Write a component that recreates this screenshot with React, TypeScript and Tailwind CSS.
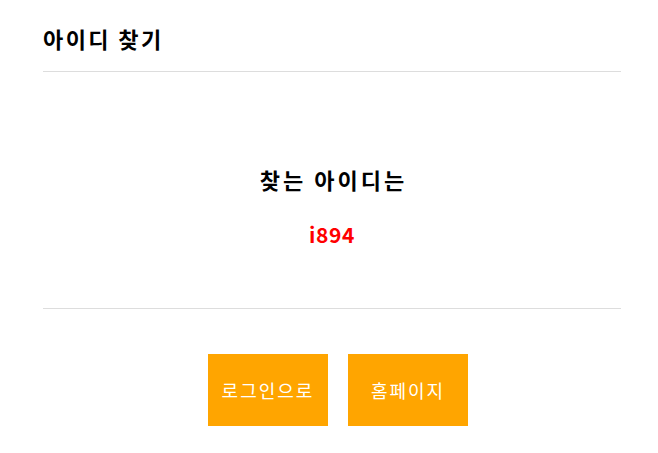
export default function App() {
  return (
    <div className="w-[658px] h-[453px] bg-white" style={{ fontFamily: '"Noto Sans CJK KR", "Noto Sans", sans-serif' }}>
      <div className="ml-[43px] w-[578px]">
        <div className="pt-[22px] h-[72px] border-b border-[#dddddd]">
          <h1 className="text-[22px] leading-[32px] font-bold text-black tracking-[2.4px]">아이디 찾기</h1>
        </div>
        <div className="h-[237px] border-b border-[#dddddd] flex flex-col items-center pt-[91px]">
          <p className="text-[22px] leading-[32px] font-bold text-black tracking-[3px] pl-[3px]">찾는 아이디는</p>
          <p className="mt-[24px] text-[21px] leading-[30px] font-bold text-[#ff0000] tracking-[0.6px]">i894</p>
        </div>
        <div className="flex gap-[20px] pt-[45px] ml-[165px]">
          <button className="w-[120px] h-[72px] bg-[#ffa500] text-white text-[18px] tracking-[2px]">로그인으로</button>
          <button className="w-[120px] h-[72px] bg-[#ffa500] text-white text-[18px] tracking-[2px]">홈페이지</button>
        </div>
      </div>
    </div>
  );
}
